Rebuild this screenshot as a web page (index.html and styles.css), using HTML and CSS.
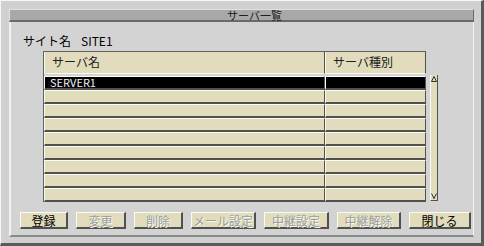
FILE: index.html
```html
<!DOCTYPE html>
<html lang="ja">
<head>
    <meta charset="UTF-8">
    <title>サーバ一覧</title>
    <link rel="stylesheet" href="styles.css">
</head>
<body>
    <div class="window">
        <div class="titlebar">サーバ一覧</div>
        <div class="panel">
            <div class="site">サイト名<span class="site-name">SITE1</span></div>

            <div class="listarea">
                <div class="list">
                    <div class="row head">
                        <div class="cell c1">サーバ名</div>
                        <div class="cell c2">サーバ種別</div>
                    </div>
                    <div class="row selected">
                        <div class="cell c1">SERVER1</div>
                        <div class="cell c2"></div>
                    </div>
                    <div class="row"><div class="cell c1"></div><div class="cell c2"></div></div>
                    <div class="row"><div class="cell c1"></div><div class="cell c2"></div></div>
                    <div class="row"><div class="cell c1"></div><div class="cell c2"></div></div>
                    <div class="row"><div class="cell c1"></div><div class="cell c2"></div></div>
                    <div class="row"><div class="cell c1"></div><div class="cell c2"></div></div>
                    <div class="row"><div class="cell c1"></div><div class="cell c2"></div></div>
                    <div class="row"><div class="cell c1"></div><div class="cell c2"></div></div>
                    <div class="row"><div class="cell c1"></div><div class="cell c2"></div></div>
                </div>
                <div class="scrollbar">
                    <svg class="arrow" width="6" height="6" viewBox="0 0 6 6">
                        <path d="M0.5 5.5 L3 0.5 L5.5 5.5 Z" fill="none" stroke="#303030" stroke-width="1"/>
                    </svg>
                    <svg class="arrow" width="6" height="6" viewBox="0 0 6 6">
                        <path d="M0.5 0.5 L3 5.5 L5.5 0.5" fill="none" stroke="#303030" stroke-width="1"/>
                    </svg>
                </div>
            </div>

            <div class="buttons">
                <button class="btn w48">登録</button>
                <button class="btn w50" disabled>変更</button>
                <button class="btn w49" disabled>削除</button>
                <button class="btn w65" disabled>メール設定</button>
                <button class="btn w65" disabled>中継設定</button>
                <button class="btn w64" disabled>中継解除</button>
                <button class="btn w62">閉じる</button>
            </div>
        </div>
    </div>
</body>
</html>
```

FILE: styles.css
```css
/* ウィンドウ全体 */
body {
    margin: 0;
    background-color: #d0d0d0;
    font-family: "Noto Sans CJK JP", sans-serif;
    font-size: 12px;
    color: #000;
}

.window {
    width: 484px;
    height: 246px;
    box-sizing: border-box;
    background-color: #d0d0d0;
    border-top: 1px solid #f6f6f6;
    border-left: 1px solid #f6f6f6;
    border-right: 3px solid #5a5a5a;
    border-bottom: 3px solid #5a5a5a;
    padding: 8px 7px 6px 8px;
    display: flex;
    flex-direction: column;
}

.titlebar {
    height: 13px;
    box-sizing: border-box;
    background-color: #a8a8a8;
    border-top: 1px solid #e0e0e0;
    border-left: 1px solid #e0e0e0;
    border-right: 1px solid #6a6a6a;
    border-bottom: 2px solid #6a6a6a;
    text-align: center;
    line-height: 11px;
    font-size: 11px;
    color: #202020;
    padding-left: 26px;
}

.panel {
    flex: 1;
    background-color: #d3d3d3;
    border-left: 2px solid #f2f2f2;
    border-right: 1px solid #f2f2f2;
    border-bottom: 2px solid #8a8a8a;
    padding: 11px 0 0 11px;
    display: flex;
    flex-direction: column;
}

.site {
    height: 16px;
    line-height: 16px;
    margin-left: 1px;
}

.site-name {
    margin-left: 10px;
}

/* 一覧 */
.listarea {
    display: flex;
    margin: 2px 0 0 21px;
    gap: 4px;
}

.list {
    border-top: 1px solid #606060;
    border-left: 1px solid #606060;
}

.row {
    display: flex;
    height: 14px;
}

.row.head {
    height: 22px;
    margin-bottom: 2px;
}

.cell {
    box-sizing: border-box;
    background-color: #e0dcbc;
    border-top: 1px solid #fafaf0;
    border-left: 1px solid #fafaf0;
    border-right: 1px solid #505050;
    border-bottom: 2px solid #505050;
    padding-left: 5px;
    line-height: 11px;
    font-size: 11px;
    white-space: nowrap;
}

.head .cell {
    border-top: none;
    border-bottom: 1px solid #fafaf0;
    line-height: 20px;
    font-size: 12px;
    color: #202020;
    padding-left: 7px;
}

.c1 {
    width: 281px;
}

.c2 {
    width: 101px;
}

.selected .cell {
    background-color: #000;
    color: #f0f0f0;
    border-top-color: #ffffff;
}

.scrollbar {
    margin-top: 24px;
    width: 8px;
    height: 126px;
    box-sizing: border-box;
    background-color: #e0dcbc;
    border-left: 1px solid #fafafa;
    border-right: 1px solid #505050;
    border-bottom: 1px solid #505050;
    display: flex;
    flex-direction: column;
    justify-content: space-between;
    align-items: center;
    padding: 1px 0;
}

.arrow {
    display: block;
}

/* ボタン */
.buttons {
    display: flex;
    gap: 8px;
    margin: 10px 0 0 -2px;
}

.btn {
    height: 17px;
    box-sizing: border-box;
    background-color: #e0dcbc;
    border-top: 1px solid #fafaf0;
    border-left: 1px solid #fafaf0;
    border-right: 2px solid #505050;
    border-bottom: 2px solid #505050;
    padding: 0;
    font-family: "Noto Sans CJK JP", sans-serif;
    font-size: 12px;
    line-height: 13px;
    color: #000;
}

.btn:disabled {
    color: #9c9c9c;
    text-shadow: 1px 1px 0 #fafaf0;
}

.w48 { width: 48px; }
.w49 { width: 49px; }
.w50 { width: 50px; }
.w62 { width: 62px; }
.w64 { width: 64px; }
.w65 { width: 65px; }
```
